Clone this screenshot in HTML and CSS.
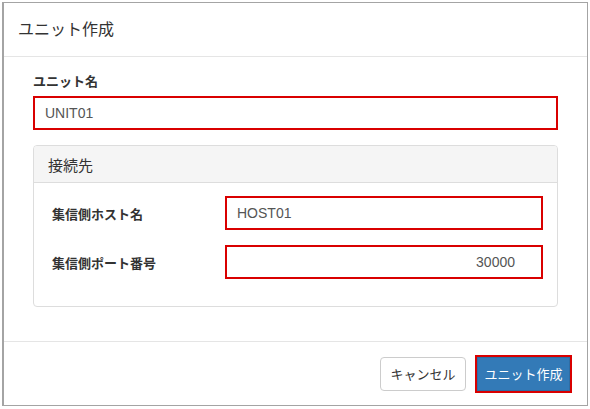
FILE: index.html
```html
<!DOCTYPE html>
<html lang="ja">
<head>
<meta charset="utf-8">
<title>ユニット作成</title>
<link rel="stylesheet" href="styles.css">
</head>
<body>
<div class="dialog">
  <div class="dialog-header">
    <h4 class="dialog-title">ユニット作成</h4>
  </div>
  <div class="dialog-body">
    <label class="field-label">ユニット名</label>
    <div class="input marked">UNIT01</div>
    <div class="panel">
      <div class="panel-heading">接続先</div>
      <div class="panel-body">
        <div class="row">
          <label class="row-label">集信側ホスト名</label>
          <div class="input marked">HOST01</div>
        </div>
        <div class="row">
          <label class="row-label">集信側ポート番号</label>
          <div class="input marked number">30000</div>
        </div>
      </div>
    </div>
  </div>
  <div class="dialog-footer">
    <button class="btn btn-default">キャンセル</button>
    <button class="btn btn-primary">ユニット作成</button>
  </div>
</div>
</body>
</html>
```
FILE: styles.css
```css
* { box-sizing: border-box; }
html, body { margin: 0; padding: 0; background: #fff; }
body {
  font-family: "Liberation Sans", "Noto Sans CJK JP", sans-serif;
  color: #333;
  font-size: 14px;
}
.dialog {
  margin: 2px 0 0 2px;
  width: 586px;
  height: 404px;
  border: 1px solid #a4a4a4;
  border-left-width: 2px;
  display: flex;
  flex-direction: column;
  background: #fff;
}
.dialog-header {
  height: 54px;
  border-bottom: 1px solid #e5e5e5;
  padding: 0 14px;
  display: flex;
  align-items: center;
}
.dialog-title {
  margin: 0;
  font-size: 16px;
  font-weight: 400;
  color: #333;
  line-height: 20px;
}
.dialog-body {
  height: 284px;
  padding: 15px 29px 0 29px;
}
.field-label {
  display: block;
  font-size: 13px;
  font-weight: 700;
  line-height: 20px;
  margin-bottom: 4px;
}
.input {
  height: 34px;
  border: 2px solid #d90000;
  padding: 0 10px;
  display: flex;
  align-items: center;
  font-size: 14px;
  color: #555;
  background: #fff;
}
.input.number { justify-content: flex-end; padding-right: 26px; }
.panel {
  margin-top: 15px;
  height: 162px;
  border: 1px solid #ddd;
  border-radius: 4px;
  overflow: hidden;
}
.panel-heading {
  height: 37px;
  background: #f5f5f5;
  border-bottom: 1px solid #ddd;
  padding: 0 14px;
  display: flex;
  align-items: center;
  font-size: 15px;
  color: #333;
}
.panel-body {
  padding: 13px 14px 0 18px;
  display: flex;
  flex-direction: column;
  gap: 15px;
}
.row {
  display: grid;
  grid-template-columns: 173px 1fr;
  align-items: center;
}
.row-label {
  font-size: 13px;
  font-weight: 700;
}
.dialog-footer {
  flex: 1;
  border-top: 1px solid #e5e5e5;
  padding: 15px 17px 0 0;
  display: flex;
  justify-content: flex-end;
  align-items: flex-start;
  gap: 11px;
}
.btn {
  height: 34px;
  border-radius: 4px;
  font-family: "Liberation Sans", "Noto Sans CJK JP", sans-serif;
  font-size: 13px;
  padding: 0 4px;
  white-space: nowrap;
  border: 1px solid #ccc;
  background: #fff;
  color: #333;
  line-height: 1;
}
.btn-default { width: 86px; }
.btn-primary {
  width: 93px;
  background: #337ab7;
  border-color: #2e6da4;
  color: #fff;
  border-radius: 0;
  outline: 2px solid #d90000;
}
```
